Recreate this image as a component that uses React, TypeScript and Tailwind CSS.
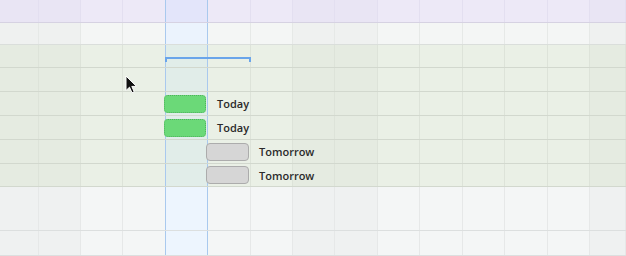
import React from "react";

const COLS = [
  "w-[39px]", "w-[42px]", "w-[42px]", "w-[43px]", "w-[42px]", "w-[43px]", "w-[42px]",
  "w-[42px]", "w-[43px]", "w-[42px]", "w-[43px]", "w-[42px]", "w-[43px]", "w-[42px]", "flex-1",
];

type RowDef = { h: string; bg: string; dark: string; hl: string; line: string; v: string };

const HEADER: RowDef = { h: "h-[23px]", bg: "bg-[#ede9f7]", dark: "bg-[#e9e5f4]", hl: "bg-[#e3e5fa]", line: "border-[#d6d2e2]", v: "border-[#e3dff0]" };
const LIGHT: RowDef = { h: "h-[22px]", bg: "bg-[#f4f6f5]", dark: "bg-[#eff1f0]", hl: "bg-[#ebf3fd]", line: "border-[#dadedb]", v: "border-[#e6e9e7]" };
const G23: RowDef = { h: "h-[23px]", bg: "bg-[#eaf0e6]", dark: "bg-[#e5ebe1]", hl: "bg-[#e1ede9]", line: "border-[#d2d8ce]", v: "border-[#dde3d9]" };
const G24: RowDef = { ...G23, h: "h-[24px]" };
const W44: RowDef = { h: "h-[44px]", bg: "bg-[#f4f6f6]", dark: "bg-[#eff1f1]", hl: "bg-[#edf5fe]", line: "border-[#dcdfdf]", v: "border-[#e6e8e8]" };
const W25: RowDef = { ...W44, h: "h-[25px]" };

const ROWS: RowDef[] = [HEADER, LIGHT, G23, G24, G24, G24, G24, G23, W44, W25];

function Cell({ row, i }: { row: RowDef; i: number }) {
  const highlight = i === 4;
  const dark = i <= 1 || i === 7 || i === 8 || i === 14;
  const bg = highlight ? row.hl : dark ? row.dark : row.bg;
  const border = i === 3 || i === 4 ? "border-[#a9c9ee]" : row.v;
  return <div className={`${COLS[i]} h-full shrink-0 border-r ${border} ${bg}`} />;
}

function Bar({ kind, label }: { kind: "green" | "gray"; label: string }) {
  const green = kind === "green";
  return (
    <div className={`flex items-center ${green ? "pl-[164px]" : "pl-[206px]"}`}>
      <div
        className={
          green
            ? "h-[18px] w-[42px] rounded-[4px] border border-dotted border-[#4fb25c] bg-[#6bd978]"
            : "h-[18px] w-[43px] rounded-[4px] border border-[#acacac] bg-[#d6d6d6]"
        }
      />
      <span
        className={`${green ? "ml-[11px]" : "ml-[10px]"} text-[11px] font-semibold leading-none text-[#2a2a2a]`}
        style={{ fontFamily: '"Open Sans", "Noto Sans", sans-serif' }}
      >
        {label}
      </span>
    </div>
  );
}

export default function App() {
  const bars: Record<number, { kind: "green" | "gray"; label: string }> = {
    4: { kind: "green", label: "Today" },
    5: { kind: "green", label: "Today" },
    6: { kind: "gray", label: "Tomorrow" },
    7: { kind: "gray", label: "Tomorrow" },
  };
  return (
    <div className="relative h-[256px] w-[626px] overflow-hidden bg-[#f4f6f6]">
      {ROWS.map((row, r) => (
        <div key={r} className={`relative flex ${row.h} border-b ${row.line}`}>
          {COLS.map((_, i) => (
            <Cell key={i} row={row} i={i} />
          ))}
          {bars[r] && (
            <div className="absolute inset-0 flex items-center">
              <Bar kind={bars[r].kind} label={bars[r].label} />
            </div>
          )}
        </div>
      ))}

      {/* range bracket */}
      <div className="absolute left-[165px] top-[57px] h-[5px] w-[86px] border-x-2 border-t-2 border-[#6aa5ea]" />

      {/* mouse cursor */}
      <svg className="absolute left-[125px] top-[75px]" width="13" height="19" viewBox="0 0 13 19">
        <path
          d="M1 1 L1 15.5 L4.5 12.2 L7 17.8 L9.2 16.8 L6.8 11.4 L11.5 11.4 Z"
          fill="#111"
          stroke="#fff"
          strokeWidth="1"
          strokeLinejoin="round"
        />
      </svg>
    </div>
  );
}
